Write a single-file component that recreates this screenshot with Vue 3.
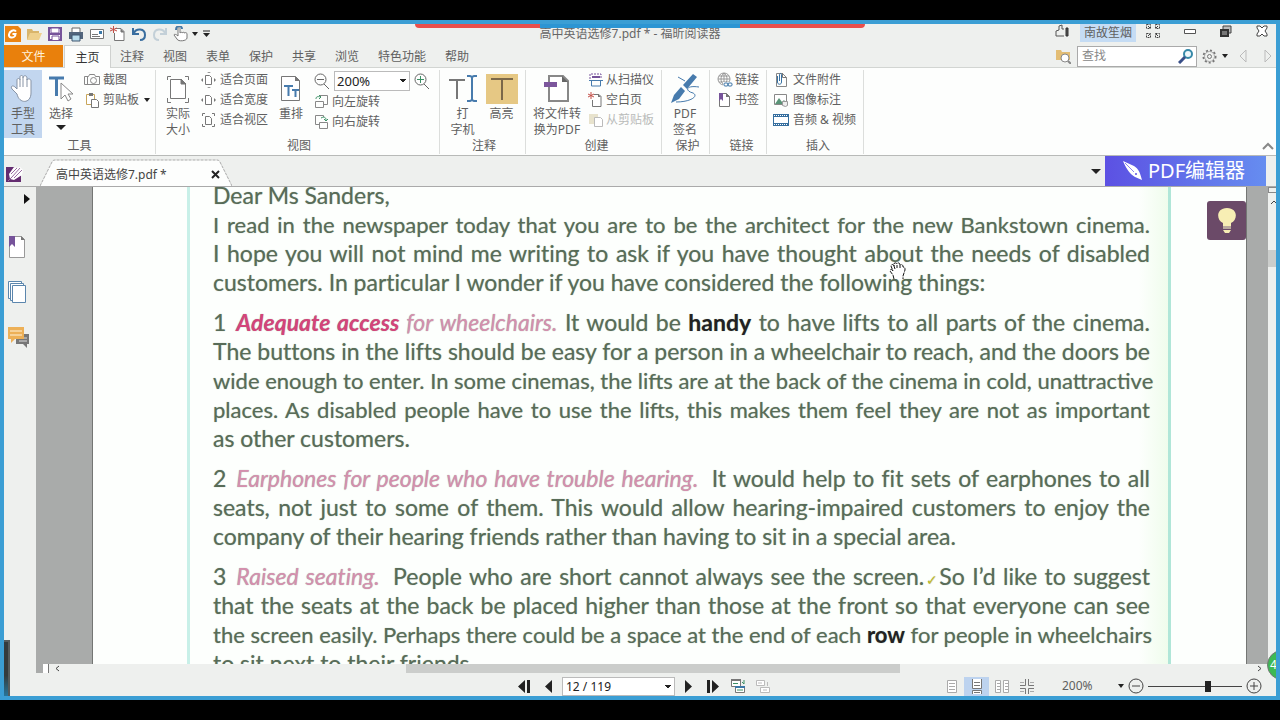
<script setup>
import { ref } from 'vue'

const menus = ['注释', '视图', '表单', '保护', '共享', '浏览', '特色功能', '帮助']
const zoom = ref('200%')
const page = ref('12 / 119')
const slider = ref(65)
const query = ref('')

const paragraphs = [
  [
    { parts: [['', 'Dear Ms Sanders,']], last: true },
    { parts: [['', 'I read in the newspaper today that you are to be the architect for the new Bankstown cinema.']], tight: true },
    { parts: [['', 'I hope you will not mind me writing to ask if you have thought about the needs of disabled']] },
    { parts: [['', 'customers. In particular I wonder if you have considered the following things:']], last: true },
  ],
  [
    { parts: [['num', '1'], ['key', 'Adequate access'], ['pink', ' for wheelchairs.'], ['', ' It would be '], ['bold', 'handy'], ['', ' to have lifts to all parts of the cinema.']] },
    { parts: [['', 'The buttons in the lifts should be easy for a person in a wheelchair to reach, and the doors be']] },
    { parts: [['', 'wide enough to enter. In some cinemas, the lifts are at the back of the cinema in cold, unattractive']], tight: true },
    { parts: [['', 'places. As disabled people have to use the lifts, this makes them feel they are not as important']], tight: true },
    { parts: [['', 'as other customers.']], last: true },
  ],
  [
    { parts: [['num', '2'], ['pink end', 'Earphones for people who have trouble hearing.'], ['', ' It would help to fit sets of earphones to all']] },
    { parts: [['', 'seats, not just to some of them. This would allow hearing-impaired customers to enjoy the']] },
    { parts: [['', 'company of their hearing friends rather than having to sit in a special area.']], last: true },
  ],
  [
    { parts: [['num', '3'], ['pink end', 'Raised seating.'], ['', ' People who are short cannot always see the screen.'], ['tick', '✓'], ['', 'So I’d like to suggest']] },
    { parts: [['', 'that the seats at the back be placed higher than those at the front so that everyone can see']] },
    { parts: [['', 'the screen easily. Perhaps there could be a space at the end of each '], ['bold', 'row'], ['', ' for people in wheelchairs']], tight: true },
    { parts: [['', 'to sit next to their friends.']], last: true },
  ],
]
</script>

<template>
  <div class="screen">
    <div class="window">
      <div class="recbar"><span></span></div>

      <header class="titlebar">
        <div class="quick">
          <svg class="logo" width="16" height="16" viewBox="0 0 16 16"><path d="M0 0h13l3 3v13H0z" fill="#ec8412" /><path d="M11 5.500C9 3 4.500 5 4 8.500s4 4 6 1.500l.5-2H7.500" fill="none" stroke="#fff" stroke-width="2" /></svg>
          <svg width="16" height="16" viewBox="0 0 16 16"><path d="M1 14V3h5l1 2h6v3" fill="#d9b56b" /><path d="M1 14l3-7h12l-3 7z" fill="#eed08d" /></svg>
          <svg width="16" height="16" viewBox="0 0 16 16"><path d="M2 2h12v12H2z" fill="#fff" stroke="#76539a" stroke-width="2" /><path d="M4 2h8v5H4zM5 14v-4h7v4" fill="#fff" stroke="#76539a" /><path d="M2 8h12" stroke="#76539a" stroke-width="2" /></svg>
          <svg width="16" height="16" viewBox="0 0 16 16"><path d="M4 6V2h8v4" fill="#fff" stroke="#666" /><path d="M1 6h14v7H1z" fill="#52657c" /><path d="M4 9h8v6H4z" fill="#b9dcec" stroke="#3f5770" /></svg>
          <svg width="16" height="16" viewBox="0 0 16 16"><path d="M1.500 3.500h13v9h-13z" fill="#fff" stroke="#777" /><path d="M10 5h3v3h-3z" fill="#3a78a7" /><path d="M3 8.500h6M3 10.500h8" stroke="#777" /></svg>
          <svg width="16" height="16" viewBox="0 0 16 16"><path d="M5 2.500h6l3 3v9H4.500V7" fill="#fff" stroke="#777" /><path d="M11 3v3h3" fill="#777" stroke="#777" /><path d="M3.500 0v7M0 2l7 3M7 2L0 5" stroke="#c34f48" /></svg>
          <svg width="16" height="16" viewBox="0 0 16 16"><path d="M3 7c2-5 11-5 11 2 0 3-2 5-5 5M2 2v6h6" fill="none" stroke="#396e9f" stroke-width="2" /></svg>
          <svg width="16" height="16" viewBox="0 0 16 16"><path d="M13 7C11 2 2 2 2 9c0 3 2 5 5 5M14 2v6H8" fill="none" stroke="#c3d0d8" stroke-width="2" /></svg>
          <svg width="16" height="16" viewBox="0 0 16 16"><path d="M5 10V3c0-2 2-2 2 0v4c1-1 2-1 2 0 1-1 2-1 2 0 2-1 3 0 3 1v4c0 3-9 4-10 1L1 9c0-1 2-1 4 1z" fill="#fff" stroke="#777" /><path d="M3 4c0-5 6-5 6-1" fill="none" stroke="#4779a5" stroke-width="2" /></svg>
          <i class="caret"></i>
          <svg width="7" height="8" viewBox="0 0 7 8"><path d="M0 1h7" stroke="#222" /><path d="M0 3h7L3.500 7z" fill="#222" /></svg>
        </div>
        <h1>高中英语选修7.pdf * - 福昕阅读器</h1>
        <div class="wincontrols">
          <svg width="16" height="14" viewBox="0 0 16 14"><path d="M4 12H2V7l3-1V2l3-1v4h2M4 12h6" fill="none" stroke="#555" /><path d="M12 4h2v8h-2z" fill="#555" stroke="#333" /></svg>
          <button class="user">南故笙烟</button>
          <svg width="14" height="14" viewBox="0 0 14 14" fill="none" stroke="#444"><path d="M.5.500h4v4h-4zM9.500.500h4v4h-4zM.5 9.500h4v4h-4zM9.500 9.500h4v4h-4z" stroke-dasharray="2 1" /><path d="M2 2l2 2M12 2l-2 2M2 12l2-2M12 12l-2-2" /></svg>
          <svg width="12" height="14" viewBox="0 0 12 14"><path d="M.5 5.500h11v4H.5z" fill="#fff" stroke="#555" /></svg>
          <svg width="12" height="14" viewBox="0 0 12 14"><path d="M3 5V2h8v7H8" fill="#bbb" stroke="#444" /><path d="M1 6h7v6H1z" fill="#777" stroke="#333" stroke-width="2" /></svg>
          <svg width="12" height="14" viewBox="0 0 12 14"><path d="M1 2h3l2 2 2-2h3v2L9 7l2 3v2H8l-2-2-2 2H1v-2l2-3-2-3z" fill="#fff" stroke="#444" /></svg>
        </div>
      </header>

      <nav class="menurow">
        <button class="file">文件</button>
        <button class="home">主页</button>
        <div class="menus"><button v-for="m in menus" :key="m">{{ m }}</button></div>
        <div class="search">
          <svg width="15" height="15" viewBox="0 0 15 15"><path d="M0 1h5l1 2h8v8H0z" fill="#e3bd74" /><circle cx="9" cy="9" r="4" fill="#fff" stroke="#888" /><path d="M12 12l3 3" stroke="#888" stroke-width="2" /></svg>
          <label class="find"><input v-model="query" placeholder="查找" aria-label="查找" /><svg width="16" height="16" viewBox="0 0 16 16"><circle cx="10" cy="6" r="4" fill="#eef7fb" stroke="#3689a8" stroke-width="2" /><path d="M7 9l-6 6" stroke="#394f88" stroke-width="3" /></svg></label>
          <svg width="15" height="15" viewBox="0 0 15 15" fill="none" stroke="#777"><circle cx="7.500" cy="7.500" r="6" stroke-width="2" stroke-dasharray="2 2" /><circle cx="7.500" cy="7.500" r="5" stroke="#aaa" /><circle cx="7.500" cy="7.500" r="2" /></svg>
          <i class="caret"></i>
          <svg class="hist" width="8" height="14" viewBox="0 0 8 14"><path d="M7 1v12L1 7z" fill="none" stroke="#bbb" /></svg>
          <svg class="hist2" width="8" height="14" viewBox="0 0 8 14"><path d="M1 1v12l6-6z" fill="none" stroke="#bbb" /></svg>
        </div>
      </nav>

      <section class="ribbon">
        <div class="group g-tools">
          <div class="items">
            <button class="big active"><svg width="26" height="30" viewBox="0 0 26 30"><path d="M7 20L2 15c-2-3 1-4 3-2l2 2V6c0-2 3-2 3 0V3c0-2 3-2 3 0v1c0-3 4-3 4 0v2c1-2 4-1 4 1v12c0 11-12 11-14 1z" fill="#fff" stroke="#8793a5" /><path d="M10 6v7M13 4v9M17 5v8" stroke="#8793a5" /></svg><span>手型<br />工具</span></button>
            <button class="big"><svg width="26" height="30" viewBox="0 0 26 30"><path d="M1 4h15M8.500 4v18" stroke="#477bad" stroke-width="3" /><path d="M13 9v16l4-4 3 6 3-2-3-5h5z" fill="#fff" stroke="#888" /></svg><span>选择</span><i class="caret wide"></i></button>
            <div class="col c-tools">
              <button class="row"><svg width="16" height="16" viewBox="0 0 16 16" fill="none" stroke="#888"><path d="M.5 4.500h4l1-2h5l1 2h4v8H.5z" /><circle cx="9.500" cy="8.500" r="3" /><path d="M3.500 4v8" /></svg>截图</button>
              <button class="row"><svg width="16" height="16" viewBox="0 0 16 16"><path d="M2.500 2.500h8v10h-8z" fill="#fff" stroke="#c8a65a" /><path d="M5 1h4v3H5z" fill="#777" /><path d="M7.500 7.500h5l2 2v6h-7z" fill="#fff" stroke="#777" /></svg>剪贴板<i class="caret"></i></button>
            </div>
          </div><h2>工具</h2>
        </div>
        <div class="group g-view">
          <div class="items">
            <button class="big"><svg width="26" height="30" viewBox="0 0 26 30" fill="none" stroke="#777"><path d="M2.500 6V2.500H6M20 2.500h3.500V6M2.500 24v4.500H6M20 28.500h3.500V24" /><path d="M5.500 5.500h11l4 4v15h-15z" fill="#fff" /><path d="M16 5v5h5z" fill="#777" /></svg><span>实际<br />大小</span></button>
            <div class="col c-fit">
              <button class="row"><svg width="15" height="16" viewBox="0 0 15 16"><path d="M4.500 3.500h4l2 2v7h-6z" fill="#fff" stroke="#777" /><path d="M6 1l2-1 2 1zM6 15l2 1 2-1zM2 6L0 8l2 2zM13 6l2 2-2 2z" fill="#777" /></svg>适合页面</button>
              <button class="row"><svg width="15" height="16" viewBox="0 0 15 16"><path d="M4.500 3.500h4l2 2v7h-6z" fill="#fff" stroke="#777" /><path d="M2 6L0 8l2 2zM13 6l2 2-2 2z" fill="#777" /></svg>适合宽度</button>
              <button class="row"><svg width="15" height="16" viewBox="0 0 15 16" fill="none" stroke="#777"><path d="M4.500 4.500h4l2 2v6h-6z" /><path d="M1.500 4V1.500H4M11 1.500h2.500V4M1.500 12v2.500H4M11 14.500h2.500V12" /></svg>适合视区</button>
            </div>
            <button class="big reflow"><svg width="26" height="30" viewBox="0 0 26 30"><path d="M3.500 2.500h14l4 4v20h-18z" fill="#fff" stroke="#777" /><path d="M17 2v5h5z" fill="#777" /><path d="M6 12h9M10.500 12v10M14 16h7M17.500 16v7" stroke="#477bad" stroke-width="2" /></svg><span>重排</span></button>
            <div class="col c-zoom">
              <div class="zoomrow">
                <svg width="16" height="17" viewBox="0 0 16 17" fill="none" stroke="#666"><circle cx="6.500" cy="6.500" r="5.500" /><path d="M3 6.500h7M10 11l5 5" /></svg>
                <select v-model="zoom" aria-label="缩放"><option>200%</option></select>
                <svg width="16" height="17" viewBox="0 0 16 17" fill="none" stroke="#666"><circle cx="6.500" cy="6.500" r="5.500" /><path d="M3 6.500h7M6.500 3v7" stroke="#3c9065" /><path d="M10 11l5 5" /></svg>
              </div>
              <button class="row"><svg width="15" height="16" viewBox="0 0 15 16" fill="none" stroke="#888"><path d="M5.500 1.500h8v9H10M1.500 7.500h8v6h-8z" /><path d="M2 5c0-2 1-3 5-2M5 1l2 2-2 2" stroke="#3c9065" /></svg>向左旋转</button>
              <button class="row"><svg width="15" height="16" viewBox="0 0 15 16" fill="none" stroke="#888"><path d="M5 10.500H1.500v-9h8V3M5.500 8.500h8v6h-8z" /><path d="M7 4c4-2 5 0 5 2M10 5l2 2 2-2" stroke="#3c9065" /></svg>向右旋转</button>
            </div>
          </div><h2>视图</h2>
        </div>
        <div class="group g-comment">
          <div class="items">
            <button class="big"><svg width="28" height="30" viewBox="0 0 28 30" fill="none"><path d="M0 6h16M8 6v19" stroke="#777" stroke-width="2" /><path d="M18 2h3l2 1 2-1h3M18 27h3l2-1 2 1h3M23 3v23" stroke="#477bad" stroke-width="2" /></svg><span>打<br />字机</span></button>
            <button class="big"><svg class="hl" width="32" height="30" viewBox="0 0 32 30"><path d="M5 5h22M16 5v21" stroke="#7b6849" stroke-width="2" /></svg><span>高亮</span></button>
          </div><h2>注释</h2>
        </div>
        <div class="group g-create">
          <div class="items">
            <button class="big pdf"><svg width="26" height="30" viewBox="0 0 26 30"><path d="M5 2h14l5 5v20H5z" fill="#fff" stroke="#888" stroke-width="2" /><path d="M18 2v6h6z" fill="#666" /><path d="M0 8h13v5H0z" fill="#7c569c" /></svg><span>将文件转<br />换为PDF</span></button>
            <div class="col c-create">
              <button class="row"><svg width="16" height="16" viewBox="0 0 16 16"><path d="M2 7V2h11v5" fill="#fff" stroke="#76539a" stroke-dasharray="2 1" /><path d="M4 5h8" stroke="#76539a" stroke-width="2" /><path d="M1 8.500h14M3.500 9v5h9V9" fill="none" stroke="#477bad" /></svg>从扫描仪</button>
              <button class="row"><svg width="16" height="16" viewBox="0 0 16 16"><path d="M6 2.500h5l2 2v10H4.500V8" fill="#fff" stroke="#777" /><path d="M10 2v3h3z" fill="#777" /><path d="M3 0v7M0 2l6 3M6 2L0 5" stroke="#c34f48" /></svg>空白页</button>
              <button class="row" disabled><svg width="16" height="16" viewBox="0 0 16 16"><path d="M1 2h9v10H1z" fill="#e8e3cd" /><path d="M6.500 5.500h6l2 2v7h-8z" fill="#fff" stroke="#bbb" /></svg>从剪贴板</button>
            </div>
          </div><h2>创建</h2>
        </div>
        <div class="group g-protect">
          <div class="items">
            <button class="big"><svg width="30" height="30" viewBox="0 0 30 30"><path d="M13 11l4 4L27 3l-4-3zM11 13l4 4-6 8-8 4 3-8z" fill="#477bad" /><path d="M8 3l7 4M29 13c-14-2-14 4-6 6 6 3-2 9-17 9" fill="none" stroke="#477bad" /></svg><span>PDF<br />签名</span></button>
          </div><h2>保护</h2>
        </div>
        <div class="group g-link">
          <div class="items"><div class="col">
            <button class="row"><svg width="16" height="16" viewBox="0 0 16 16" fill="none" stroke="#999"><circle cx="7" cy="7" r="6" /><path d="M1 7h12M7 1v12M2 4h10M2 10h10M7 1C3 4 3 10 7 13M7 1c4 3 4 9 0 12" /><rect x="6" y="10" width="10" height="5" fill="#fff" stroke="none" /><rect x="7" y="11" width="4" height="3" rx="1" stroke="#3872a4" /><rect x="11" y="11" width="4" height="3" rx="1" stroke="#3872a4" /></svg>链接</button>
            <button class="row"><svg width="16" height="16" viewBox="0 0 16 16"><path d="M2.500 1.500h7l3 3v10h-10z" fill="#fff" stroke="#777" /><path d="M9 1v4h4z" fill="#777" /><path d="M2 1h4v8L4 7 2 9z" fill="#76539a" /></svg>书签</button>
          </div></div><h2>链接</h2>
        </div>
        <div class="group g-insert">
          <div class="items"><div class="col">
            <button class="row"><svg width="16" height="16" viewBox="0 0 16 16" fill="none"><path d="M3.500 1.500h6l4 4v9h-10z" stroke="#888" /><path d="M9.500 1v4.500h4" stroke="#777" /><path d="M4.500 4v6c0 3 4 3 4 0V3c0-2-2-2-2 0v6" stroke="#3872a4" /></svg>文件附件</button>
            <button class="row"><svg width="16" height="16" viewBox="0 0 16 16"><path d="M1.500 2.500h12v10h-12z" fill="#fff" stroke="#888" /><path d="M2 12l4-6 3 4 2-2 3 4z" fill="#5a9477" /><path d="M9.500 9.500h5v4l-2 1-3-1z" fill="#eee" stroke="#999" /></svg>图像标注</button>
            <button class="row"><svg width="16" height="16" viewBox="0 0 16 16"><path d="M0 2h16v12H0z" fill="#356e9e" /><path d="M1 5h14v6H1z" fill="#fff" /><path d="M1 3.500h14M1 12.500h14" stroke="#fff" stroke-dasharray="1 1" /></svg>音频 &amp; 视频</button>
          </div></div><h2>插入</h2>
        </div>
        <svg class="collapse" width="12" height="8" viewBox="0 0 12 8"><path d="M1 7l5-5 5 5" fill="none" stroke="#888" stroke-width="2" /></svg>
      </section>

      <div class="doctabs">
        <svg class="appicon" width="17" height="17" viewBox="0 0 17 17"><path d="M0 1h8l1 1 6 8v6H0z" fill="#642d70" /><path d="M3 8l5-7 3 1 3-1 3 3-1 5-8 5-4-1z" fill="#fff" /><path d="M5 8l6-6M6 11l8-9M8 12l8-8M2 15l4-4" stroke="#9a70a2" /></svg>
        <div class="tab">
          <svg class="tabshape" viewBox="0 0 192 27" preserveAspectRatio="none"><path d="M0 27L12 3q1-2 3-2h162q2 0 3 2l12 24" fill="#fdfefd" stroke="#aaa" stroke-dasharray="3 1" /></svg>
          <span>高中英语选修7.pdf *</span>
          <button aria-label="关闭"><svg width="9" height="9" viewBox="0 0 9 9"><path d="M1 1l7 7M8 1L1 8" stroke="#222" stroke-width="2" /></svg></button>
        </div>
        <div class="tabend"><i class="caret wide"></i>
          <button class="editor"><svg width="22" height="24" viewBox="0 0 22 24"><path d="M1 2l11 5c5 3 6 7 8 14l-7-3C8 15 5 11 1 2z" fill="#fff" /><path d="M3 4l9 9" stroke="#8d86ee" /><circle cx="14" cy="15" r="1" fill="#5d52e4" /></svg>PDF编辑器</button>
        </div>
      </div>

      <div class="workspace">
        <aside>
          <svg class="expand" width="6" height="10" viewBox="0 0 6 10"><path d="M0 0l6 5-6 5z" fill="#111" /></svg>
          <svg width="20" height="22" viewBox="0 0 20 22"><path d="M1.500.500h12l3 3v18h-15z" fill="#fff" stroke="#999" /><path d="M13 0v4h4z" fill="#777" /><path d="M1 0h6v11l-3-3-3 3z" fill="#76539a" /></svg>
          <svg width="20" height="22" viewBox="0 0 20 22" fill="#fff" stroke="#5b86ad"><path d="M.5.500h13v17H.5z" /><path d="M2.500 2.500h13v17h-13z" /><path d="M4.500 4.500h13v17h-13z" /></svg>
          <svg width="22" height="22" viewBox="0 0 22 22"><path d="M8 8h13v10h-2v4l-4-4H8z" fill="#777" /><path d="M11 12h8M11 15h8" stroke="#ddd" /><path d="M0 1h16v12H7l-4 4v-4H0z" fill="#edb057" /><path d="M2 5h12M2 9h12" stroke="#fff3dc" /></svg>
        </aside>
        <div class="viewer">
          <div class="canvas">
            <main class="page">
              <article>
                <p v-for="(para, i) in paragraphs" :key="i">
                  <span v-for="(line, j) in para" :key="j" class="line" :class="{ last: line.last, tight: line.tight }"><span v-for="(part, k) in line.parts" :key="k" :class="part[0]">{{ part[1] }}</span></span>
                </p>
              </article>
              <svg class="hand" width="17" height="18" viewBox="0 0 17 18"><path d="M5 17l-1-4-3-4c0-2 2-2 3 0L2 4c0-2 3-2 3 0V2c0-2 3-1 3 0 1-2 3-1 3 1 2-1 3 0 3 2 2 0 2 1 2 3l-2 6v3" fill="#fff" stroke="#111" stroke-dasharray="4 1" /><path d="M5 4l1 3M8 3v3M11 3v3" stroke="#111" /></svg>
              <button class="tip" aria-label="提示"><svg width="20" height="28" viewBox="0 0 20 28"><path d="M10 1c11 0 11 12 4 15v3H6v-3C-1 13-1 1 10 1z" fill="#f7eeb4" /><path d="M6 19h8v3H6z" fill="#b9a99c" /><path d="M6 23h8l-2 3H8z" fill="#f7eeb4" /></svg></button>
            </main>
            <div class="vscroll"><i class="split"></i><svg width="8" height="6" viewBox="0 0 8 6"><path d="M3 5l3-3 2 2" fill="none" stroke="#444" /></svg><i class="vthumb"></i></div>
          </div>
          <div class="hscroll"><i class="hsplit"></i><svg width="5" height="7" viewBox="0 0 5 7"><path d="M4 1L1 3.500 4 6" fill="none" stroke="#444" /></svg><div class="track"><i></i></div><svg width="5" height="7" viewBox="0 0 5 7"><path d="M1 1l3 2.500L1 6" fill="none" stroke="#444" /></svg></div>
          <footer>
            <div class="pager">
              <svg width="13" height="13" viewBox="0 0 13 13"><path d="M7 0v13L0 6.500zM9 0h3v13H9z" fill="#222" /></svg>
              <svg width="7" height="13" viewBox="0 0 7 13"><path d="M7 0v13L0 6.500z" fill="#222" /></svg>
              <select v-model="page" aria-label="页码"><option>12 / 119</option></select>
              <svg width="7" height="13" viewBox="0 0 7 13"><path d="M0 0v13l7-6.500z" fill="#222" /></svg>
              <svg width="13" height="13" viewBox="0 0 13 13"><path d="M6 0v13l7-6.500zM1 0h3v13H1z" fill="#222" /></svg>
              <svg class="back" width="15" height="15" viewBox="0 0 15 15"><path d="M.5 1.500h9v6h-9z" fill="#fff" stroke="#777" /><path d="M4.500 7.500h9v6h-9z" fill="#fff" stroke="#777" /><path d="M0 1h10" stroke="#777" stroke-width="2" /><path d="M4 8h10" stroke="#3a78a7" stroke-width="2" /><path d="M6 11h6M2 4.500h5M13 1v4l-2-2" fill="none" stroke="#3c9065" /></svg>
              <svg width="15" height="15" viewBox="0 0 15 15" fill="#fff" stroke="#bbb"><path d="M.5 1.500h8v5h-8zM4.500 8.500h9v5h-9zM2 4h4M7 11h4M11.500 3v4" /></svg>
            </div>
            <div class="layouts">
              <button aria-label="单页"><svg width="14" height="15" viewBox="0 0 14 15" stroke="#aaa"><path d="M2.500 1.500h9v12h-9z" fill="#fff" /><path d="M4 4.500h6M4 7.500h6M4 10.500h6" /></svg></button>
              <button class="on" aria-label="连续"><svg width="14" height="15" viewBox="0 0 14 15" stroke="#777"><path d="M2.500 0v9.500h9V0M2.500 15v-3.500h9V15" fill="#fff" /><path d="M4 3.500h6M4 6.500h6M4 13.500h6" /></svg></button>
              <button aria-label="对开"><svg width="16" height="15" viewBox="0 0 16 15" stroke="#aaa"><path d="M1.500 1.500h5v12h-5zM9.500 1.500h5v12h-5z" fill="#fff" /><path d="M3 4.500h3M3 7.500h3M3 10.500h3M11 4.500h3M11 7.500h3M11 10.500h3" /></svg></button>
              <button aria-label="连续对开"><svg width="16" height="15" viewBox="0 0 16 15" fill="none" stroke="#777"><path d="M6.500 0v6.500H1M9.500 0v6.500H15M6.500 15V9.500H1M9.500 15V9.500H15" /><path d="M1 3.500h4M11 3.500h4M1 12.500h4M11 12.500h4" stroke="#aaa" /></svg></button>
            </div>
            <div class="zoomer">
              <output>200%</output><i class="caret"></i>
              <svg width="16" height="16" viewBox="0 0 16 16" fill="none" stroke="#444"><circle cx="8" cy="8" r="7" /><path d="M4 8h8" /></svg>
              <input v-model="slider" type="range" min="0" max="100" aria-label="缩放比例" />
              <svg width="16" height="16" viewBox="0 0 16 16" fill="none" stroke="#444"><circle cx="8" cy="8" r="7" /><path d="M4 8h8M8 4v8" /></svg>
            </div>
          </footer>
        </div>
      </div>
      <div class="meter"></div>
      <div class="ballclip"><div class="ball">4</div></div>
    </div>
  </div>
</template>

<style>
body { background: #000; }
</style>

<style scoped>
.screen, .screen * { box-sizing: border-box; }
.screen { height: 100vh; padding: 20px 0; background: #000; font: 12px/16px "Noto Sans", "Noto Sans CJK SC", sans-serif; color: #606060; }
.window { position: relative; height: 100%; display: flex; flex-direction: column; border: 4px solid #3b9ed4; background: #eef0ee; overflow: hidden; }
button, input, select { font: inherit; color: inherit; border: 0; background: none; padding: 0; margin: 0; border-radius: 0; }
svg { flex: none; display: block; }
h1, h2, p { margin: 0; font: inherit; }
.caret { flex: none; width: 0; height: 0; border: 3px solid transparent; border-top: 4px solid #222; border-bottom: 0; }
.caret.wide { border-width: 5px 5px 0; }
.recbar { position: absolute; z-index: 3; top: 0; left: 50%; width: 450px; height: 4px; margin-left: -225px; background: #ea4f4b; border-radius: 0 0 6px 6px; }
.recbar span { display: block; width: 200px; height: 4px; margin: 0 auto; background: #2c95d3; }

.titlebar { flex: none; height: 21px; display: grid; grid-template-columns: 535fr auto 555fr; }
.quick { display: flex; align-items: center; gap: 5px; height: 19px; padding-left: 1px; }
.quick .caret { margin-left: -2px; }
h1 { line-height: 19px; color: #666; }
.wincontrols { display: flex; align-items: flex-start; justify-content: flex-end; gap: 10px; padding-right: 8px; }
.wincontrols > svg + svg { margin-left: 14px; }
.user { height: 18px; padding: 0 4px; background: #c5dcf4; line-height: 16px; }

.menurow { flex: none; display: flex; height: 23px; border-bottom: 1px solid #d2d5d2; }
.menurow button { padding-top: 2px; }
.file { width: 59px; height: 22px; background: #e9800c; color: #fff2dc; }
.home { width: 47px; height: 23px; margin-left: 1px; border: 1px solid #cfd1cf; border-bottom: 0; background: #fdfefd; color: #333; }
.menus { display: flex; gap: 19px; margin-left: 9px; }
.menus button { height: 22px; white-space: nowrap; }
.search { margin-left: auto; display: flex; align-items: center; padding-right: 4px; }
.find { display: flex; align-items: center; width: 120px; height: 21px; margin: 0 5px 0 6px; padding: 0 2px 0 4px; border: 1px solid #aaa; background: #fff; }
.find input { flex: 1; min-width: 0; outline: 0; }
.find input::placeholder { color: #888; opacity: 1; }
.search > .caret { margin-left: 5px; }
.hist { margin-left: 11px; }
.hist2 { margin-left: 17px; }

.ribbon { position: relative; flex: none; display: flex; height: 88px; padding-top: 2px; background: #fdfefd; border-bottom: 1px solid #b8bab8; }
.group { display: flex; flex-direction: column; height: 84px; border-right: 1px solid #dcdedc; }
.items { display: flex; height: 68px; }
h2 { text-align: center; line-height: 16px; }
.big { display: flex; flex-direction: column; align-items: center; width: 38px; height: 68px; padding-top: 4px; white-space: nowrap; line-height: 16px; }
.big span { margin-top: 2px; }
.big .caret { margin-top: 3px; }
.active { background: #c2d6ef; }
.col { display: flex; flex-direction: column; align-items: flex-start; }
.row { display: flex; align-items: center; gap: 4px; height: 20px; white-space: nowrap; }
.row:disabled { color: #b9bbb9; }
.row .caret { margin-left: 2px; }
.g-tools { width: 152px; }
.g-tools .row { gap: 3px; }
.c-tools { margin-left: 4px; }
.g-view { width: 284px; padding-left: 3px; }
.c-fit { margin-left: 4px; }
.reflow { margin-left: 4px; }
.c-zoom { margin-left: 4px; }
.c-zoom .row { gap: 3px; }
.zoomrow { display: flex; align-items: center; gap: 4px; height: 22px; }
select {
  appearance: none;
  border: 1px solid #bbb;
  color: #222;
  background:
    linear-gradient(to top right, transparent 50%, #222 50%) right 6px center / 3px 4px no-repeat,
    linear-gradient(to top left, transparent 50%, #222 50%) right 3px center / 3px 4px no-repeat,
    #fff;
}
.zoomrow select { width: 76px; height: 20px; padding: 0 2px; font-size: 13px; line-height: 18px; }
.g-comment { width: 86px; padding-left: 3px; }
.g-comment .big { width: 39px; }
.hl { background: #e6c884; }
.g-create { width: 136px; padding-left: 6px; }
.pdf { width: 50px; }
.c-create { margin-left: 6px; }
.c-create .row { gap: 2px; }
.g-protect { width: 48px; padding-left: 4px; }
.g-link { width: 57px; padding-left: 7px; }
.g-link .row { gap: 2px; }
.g-insert { width: 97px; padding-left: 6px; }
.collapse { position: absolute; right: 2px; bottom: 5px; }

.doctabs { flex: none; display: flex; align-items: flex-end; height: 31px; border-bottom: 1px solid #aaa; }
.appicon { margin: 0 17px 3px 2px; }
.tab { position: relative; width: 192px; height: 27px; display: flex; align-items: center; justify-content: space-between; padding: 4px 12px 0 16px; color: #444; white-space: nowrap; }
.tabshape { position: absolute; inset: 0; width: 100%; height: 100%; }
.tab span, .tab button { position: relative; }
.tabend { margin-left: auto; display: flex; align-items: center; gap: 4px; padding-right: 10px; }
.editor { display: flex; align-items: center; gap: 4px; width: 161px; height: 30px; padding-left: 17px; background: linear-gradient(90deg, #5c51e3, #668df0); color: #fff; font-size: 20px; white-space: nowrap; }

.workspace { flex: 1; min-height: 0; display: flex; }
aside { flex: none; width: 32px; display: flex; flex-direction: column; padding: 7px 0 0 4px; gap: 23px; }
.expand { margin: 0 0 9px 16px; }
.viewer { flex: 1; min-width: 0; display: flex; flex-direction: column; }
.canvas { flex: 1; min-height: 0; display: flex; background: #a9abaa; }
.page { position: relative; flex: 1; min-width: 0; margin: 0 21px 0 56px; padding: 0 75px 0 94px; overflow: hidden; border: solid #747674; border-width: 0 1px; background: #fdfffd; }
article { display: flow-root; height: 100%; padding: 0 18px 0 23px; border: solid #c8f0e8; border-width: 0 3px; border-right-color: #b0e6d8; background: linear-gradient(90deg, transparent 97%, #effcec); font: 23px/29px Lato, "Noto Sans", sans-serif; font-variant-ligatures: none; color: #586c58; text-shadow: 0 0 1px #9dab9d; }
p { margin-bottom: 11px; }
p:first-child { margin-top: -6px; }
.line { display: block; white-space: nowrap; text-align: justify; text-align-last: justify; }
.line.last { text-align-last: left; }
.line.tight { font-size: 22px; font-variant-ligatures: normal; }
.num { margin-right: 10px; }
.key { color: #d4447a; font-weight: bold; font-style: italic; }
.pink { color: #d58fae; font-style: italic; }
.end { margin-right: 6px; }
.bold { color: #222; font-weight: bold; }
.tick { font-size: 14px; line-height: 14px; color: #c9bd26; }
.hand { position: absolute; left: 796px; top: 75px; }
.tip { position: absolute; right: 0; top: 14px; width: 39px; height: 39px; display: grid; place-items: center; border-radius: 3px; background: #6b4a68; }
.vscroll { flex: none; width: 8px; background: #eef0ee; }
.split { display: block; height: 6px; margin-bottom: 6px; border: 1px solid #888; border-right: 0; }
.vthumb { display: block; height: 17px; margin-top: 45px; background: #cbcdcb; }
.hscroll { flex: none; display: flex; align-items: center; height: 9px; padding-right: 14px; }
.hsplit { width: 13px; height: 9px; margin-right: 6px; border-left: 7px solid #a9abaa; border-right: 1px solid #777; background: #fff; }
.track { flex: 1; height: 9px; padding-left: 346px; }
.track i { display: block; width: 58%; height: 9px; background: #cbcdcb; }
footer { flex: none; display: flex; align-items: center; height: 23px; padding-right: 14px; overflow: hidden; }
.pager { display: flex; align-items: center; gap: 10px; margin: 4px auto 0 482px; }
.pager svg:first-child { margin-right: 4px; }
.pager select { width: 113px; height: 19px; padding: 0 3px; font-size: 12px; line-height: 17px; }
.pager svg:nth-child(4) { margin-right: 4px; }
.back { margin-left: 2px; }
.layouts { display: flex; align-items: center; margin-top: 4px; }
.layouts button { display: grid; place-items: center; width: 25px; height: 19px; }
.layouts .on { background: #bdd3ef; }
.zoomer { display: flex; align-items: center; gap: 4px; margin: 3px 0 0 23px; }
.zoomer output { width: 52px; }
.zoomer input { appearance: none; width: 94px; height: 11px; background: linear-gradient(#444, #444) center / 100% 1px no-repeat; }
.zoomer input::-webkit-slider-thumb { appearance: none; width: 6px; height: 11px; background: #222; }
.meter { position: absolute; left: 0; bottom: 0; width: 6px; height: 56px; background: linear-gradient(#343b3d 62%, #28769a); border: solid #555b5c; border-width: 2px 2px 0 0; }
.ballclip { position: absolute; right: 0; bottom: 14px; width: 9px; height: 32px; overflow: hidden; }
.ball { width: 30px; height: 30px; padding-left: 2px; border: 1px solid #777; border-radius: 50%; background: #3eb955; color: #fff; line-height: 28px; }
</style>
